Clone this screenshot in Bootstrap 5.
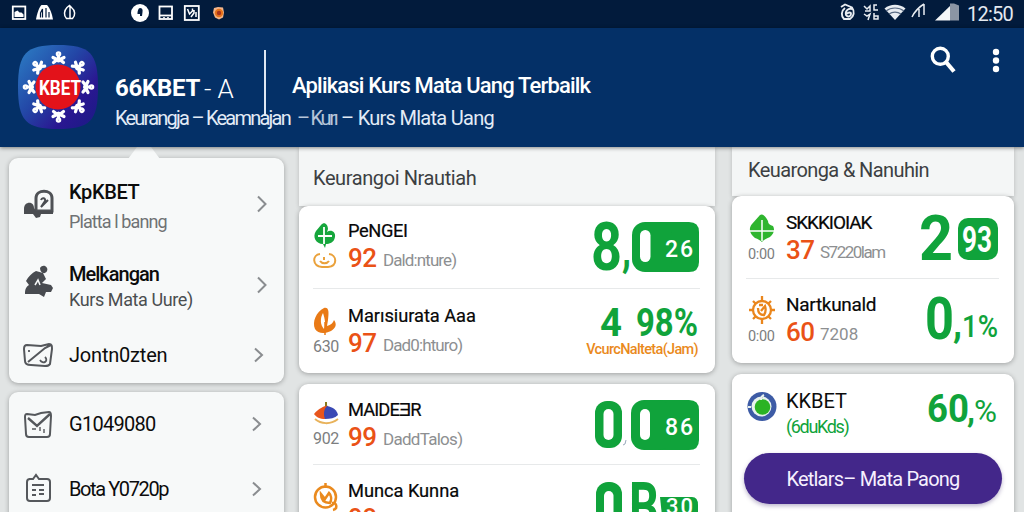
<!DOCTYPE html>
<html lang="id">
<head>
<meta charset="utf-8">
<meta name="viewport" content="width=device-width, initial-scale=1">
<title>66KBET</title>
<link href="https://cdn.jsdelivr.net/npm/bootstrap@5.3.0/dist/css/bootstrap.min.css" rel="stylesheet">
<style>
body{font-family:Roboto,"Liberation Sans",sans-serif;background:#e1e4e4;width:1024px;height:512px;overflow:hidden;color:#111}
svg{display:block;flex:none;overflow:visible}
.statusbar{height:28px;background:#021b3c;color:#fff}
.clock{font-size:20px;line-height:26px;letter-spacing:-.76px;color:#e4e9f0;margin:0 11px 0 7px}
.appbar{height:119px;background:#043067;color:#fff;box-shadow:0 1px 4px rgba(0,0,0,.45);z-index:3}
.brand-row{height:95px;padding-top:22px}
.brand{font-size:24px;font-weight:700;letter-spacing:-.29px;line-height:30px;width:89px;margin-top:23px}
.brand-tail{font-size:26px;font-weight:300;line-height:34px;width:42px;letter-spacing:-.2px;margin-top:22px}
.rule-v{width:2px;height:66px;background:#dfe7f2;margin-left:18px;flex:none}
.headline{font-size:22px;font-weight:500;letter-spacing:-.83px;line-height:30px;white-space:nowrap;margin:21px 0 0 26px}
.subline{font-size:20px;line-height:24px;white-space:nowrap;color:#e3ebf6;margin-top:-17px}
.sub-a{width:182px;letter-spacing:-1.77px}.sub-b{width:44px;letter-spacing:-2.3px;opacity:.8}.sub-c{letter-spacing:-.72px}
.board{height:365px;padding-left:9px;overflow:hidden}
.col-menu{width:275px;margin-right:15px}.col-mid{width:416px;margin-right:17px}.col-side{width:282px}
.panel{background:#f7f9f9;border-radius:9px;box-shadow:0 1px 5px rgba(0,0,0,.3)}
.panel-white{background:#fff}
.menu-top{margin-top:11px;height:225px}
.notch{left:119px;top:-11px}
.menu-row{padding:0 17px 0 14px}
.menu-row .ico{width:46px}
.m-title{font-size:20px;font-weight:400;line-height:26px;white-space:nowrap;color:#0c0c0c}
.m-title.strong{font-weight:500}
.m-note{font-size:18px;line-height:25px;white-space:nowrap;color:#6f7274}
.m-note.dark{color:#4b4e50}
.section{background:#f4f6f6;color:#3c3f42;font-size:20px;padding-left:14px;white-space:nowrap;box-shadow:0 1px 4px rgba(0,0,0,.18)}
.section span{display:block;line-height:24px}
.rates{padding:0 15px 0 14px}
.rate{white-space:nowrap}
.rate+.rate{border-top:1px solid #e7e9ea}
.sign{width:35px}
.side .sign{width:40px}
.r-name{font-size:18.3px;font-weight:400;line-height:26px;color:#080808;-webkit-text-stroke:.2px #080808}
.side .r-name{font-size:19px}
.r-num{font-size:26px;font-weight:500;line-height:28px;letter-spacing:-.6px;color:#ea5216;width:35px}
.side .r-num{width:34px}
.r-sub{font-size:17px;line-height:32px;color:#8d8f91}
.r-tag{font-size:16px;line-height:20px;color:#7c7e80;letter-spacing:-.33px;margin-top:2px}
.r-tag.mini{font-size:14.5px;margin-left:2px}
.green{fill:#10a33b;color:#10a33b}
.big{font-weight:700;font-family:Roboto,sans-serif}
.under{font-size:14.5px;font-weight:500;letter-spacing:-.65px;line-height:18px;color:#ea8a1c;margin:1px 2px 0 0}
.cta{height:51px;border-radius:26px;background:#43278a;color:#f6f0ff;font-size:20px;letter-spacing:-.8px;border:0;box-shadow:0 2px 4px rgba(60,40,110,.35)}
.cta:hover{background:#4c2f96;color:#fff}
.t05{letter-spacing:-.05px}.t4{letter-spacing:-.4px}.t7{letter-spacing:-.72px}.t9{letter-spacing:-.9px}.t15{letter-spacing:-1.5px}
</style>
</head>
<body>
<header class="statusbar d-flex align-items-center">
  <svg width="230" height="28" viewBox="0 0 230 28" fill="none" stroke="#fff" stroke-width="1.8">
    <rect x="12.800" y="6.500" width="12.500" height="12.500"/><path d="M14.500 17v-5l3-1.500 2 2h2l2 2V17z" fill="#fff" stroke="none"/>
    <path d="M36 19.500c1-6 3-12 5.500-14.500h5.500c3 3 5 9 6 14.500z" fill="#fff" stroke="none"/><path d="M40.500 17.500V13l2-4v8.500M46 8v9.500M49 12v5.500" stroke="#021b3c" stroke-width="1.200"/>
    <path d="M67 7.500c-3 3-3.500 8-.5 11h6c3-3 3-8-1-11l-2-2zM70 6v12" stroke-width="1.500"/>
    <circle cx="140" cy="13" r="9" fill="#fff" stroke="none"/><path d="M140 8c2 0 3 1.500 2.500 4l-.5 4h-2v-2h-2.500c0-3 1-6 2.500-6z" fill="#021b3c" stroke="none"/>
    <rect x="159.500" y="6.500" width="12.500" height="12.500"/><path d="M160 15.500h12"/><path d="M163 17.700h2M167 17.700h2" stroke-width="1"/>
    <rect x="184.800" y="6" width="14" height="14"/><path d="M187.500 9l2 5 3-3v-2.500M194 10v3l-3 4M196 12v5" stroke-width="1.500"/>
    <path d="M214 8l4-1 5 .5 1 5-1 5-4 2-4-2-2-5z" fill="#f3b58a" stroke="none"/><circle cx="219" cy="13" r="3.200" fill="#a8341b" stroke="#e6741c" stroke-width="2"/>
  </svg>
  <svg class="ms-auto" width="130" height="28" viewBox="830 0 130 28" fill="none" stroke="#e9edf2" stroke-width="1.900">
    <path d="M841 7l4-2.500 7 3c3 4 2 9-2 11.500h-6c-3-3-3-8 1-11M852 9c-4-1-7 2-6 6 2 3 5 1 5-1s-3-2-4 0"/>
    <path d="M864 6l3 3 3-3v5h-5M877 5h-3v5h4M864 14l3 2 3-2-2 6M874 13v6h4v-3h-4" stroke-width="1.500"/>
    <path d="M884.500 8.500c6-5 15-5 21 0L895 20z" fill="#e9edf2" stroke="none"/><path d="M886 11c5-4 13-4 18 0M889 14c3.500-2.500 8.500-2.500 12 0" stroke="#5a6b84" stroke-width="1.200"/>
    <path d="M912 17c3-6 7-10 12-13M919 9v8M924 4v11" stroke-width="1.500"/>
    <path d="M950 3.500h4l5 2V20.500h-9z" fill="#8b95a4" stroke="none"/><path d="M935 20.500L950 6v14.500z" fill="#f4f6f8" stroke="none"/>
  </svg>
  <span class="clock">12:50</span>
</header>

<nav class="appbar d-flex align-items-start position-relative">
  <svg class="mt-3 ms-3" width="84" height="88" viewBox="16 44 84 88">
    <defs><linearGradient id="lg" x1="0" y1="0" x2="1" y2=".9"><stop offset="0" stop-color="#2c80c6"/><stop offset=".45" stop-color="#2346a6"/><stop offset=".75" stop-color="#2a1791"/><stop offset="1" stop-color="#1c1a86"/></linearGradient>
    <g id="man" fill="none" stroke="#fff" stroke-width="3.200" stroke-linecap="round" stroke-linejoin="round"><circle cx="0" cy="-33" r="1.200"/><path d="M-5.500-29.500l3 1.500h5l3-1.500M0-31v5M-5-24.500l2.500-2h5l2.500 2"/></g></defs>
    <path d="M58 45c32 0 40 8 40 42s-8 42-40 42-40-8-40-42 8-42 40-42z" fill="url(#lg)"/>
    <g transform="translate(58.500 87)"><use href="#man"/><use href="#man" transform="rotate(45)"/><use href="#man" transform="rotate(90)"/><use href="#man" transform="rotate(135)"/><use href="#man" transform="rotate(180)"/><use href="#man" transform="rotate(225)"/><use href="#man" transform="rotate(270)"/><use href="#man" transform="rotate(315)"/></g>
    <circle cx="58" cy="87" r="22.500" fill="#e3121a"/>
    <text x="39" y="94.500" font-size="20" font-weight="700" fill="#fff" textLength="42" lengthAdjust="spacingAndGlyphs">KBET</text>
  </svg>
  <div class="flex-grow-1" style="margin-left:15px">
    <div class="brand-row d-flex align-items-start">
      <span class="brand">66KBET</span>
      <span class="brand-tail">- A</span>
      <span class="rule-v"></span>
      <span class="headline">Aplikasi Kurs Mata Uang Terbailk</span>
    </div>
    <div class="subline d-flex"><span class="sub-a">Keurangja – Keamnajan</span><span class="sub-b">– Kurı</span><span class="sub-c">– Kurs Mlata Uang</span></div>
  </div>
  <svg class="mt-3" width="30" height="32" viewBox="926 44 30 32" fill="none" stroke="#fff" stroke-width="3.400"><circle cx="938.300" cy="56.300" r="8"/><path d="M944 62l8 9.500" stroke-width="4.200"/></svg>
  <svg class="mt-3" style="margin:0 20px 0 30px" width="16" height="32" viewBox="988 44 16 32" fill="#fff"><circle cx="996" cy="52" r="3.200"/><circle cx="996" cy="60.500" r="3.200"/><circle cx="996" cy="69" r="3.200"/></svg>
</nav>

<main class="board d-flex align-items-start">
  <aside class="col-menu flex-shrink-0">
    <section class="panel menu-top position-relative d-flex flex-column">
      <svg class="notch position-absolute" width="32" height="12" fill="#f7f9f9"><path d="M0 12L9 0h14l9 12z"/></svg>
      <div class="menu-row d-flex align-items-center" style="height:97px">
        <div class="ico"><svg width="32" height="32" viewBox="0 0 32 32"><path d="M13 23V10c0-9 16-9 16 0v13z" fill="none" stroke="#4f5256" stroke-width="3"/><path d="M1 21c0-8 10-8 10-1l2 3h17v3H18l-1 3-4 1-3-4H1z" fill="#4a4d51"/><path d="M18 12c1-3 5-2 4 1l-4 6 7-7" fill="none" stroke="#4a4d51" stroke-width="2"/></svg></div>
        <div class="pt-1"><div class="m-title strong t4">KpKBET</div><div class="m-note t9 mt-1">Platta l banng</div></div>
        <svg class="ms-auto" width="11" height="18" fill="none" stroke="#8a8d90" stroke-width="2"><path d="M2 1.500l7.500 7.500L2 16.500"/></svg>
      </div>
      <div class="menu-row d-flex align-items-center" style="height:62px">
        <div class="ico"><svg width="32" height="34" viewBox="0 0 32 34"><path d="M17 4c3-5 9-1 7 3-2 4-7 2-7-3zM13 7l7 2 3 6-4 4 9 2 2 3-2 4h-5l-2 5-5-3H2c0-5 1-7 4-9l-3-4c2-4 6-8 10-10z" fill="#484b50"/><path d="M12 21l3-5 2 5" stroke="#f7f9f9" stroke-width="1.500" fill="none"/></svg></div>
        <div style="padding-top:10px"><div class="m-title strong" style="letter-spacing:-1px">Melkangan</div><div class="m-note dark t4">Kurs Mata Uure)</div></div>
        <svg class="ms-auto mt-2" width="11" height="18" fill="none" stroke="#8a8d90" stroke-width="2"><path d="M2 1.500l7.500 7.500L2 16.500"/></svg>
      </div>
      <div class="menu-row d-flex align-items-center pt-3" style="height:74px">
        <div class="ico"><svg width="31" height="28" viewBox="0 0 31 28" fill="none" stroke="#54575b" stroke-width="2"><path d="M4 4l14 1 8-2c3 0 3 2 3 5l-2 15c-1 2-3 2-5 2l-14-1c-4 0-6-1-6-4L1 8c0-3 1-4 3-4zM5 21L22 7l6-3"/><path d="M17 19c3 5 9 1 5-3M6 9v2" stroke-width="1.800"/></svg></div>
        <div class="m-title" style="letter-spacing:-.2px">Jontn0zten</div>
        <svg class="ms-auto me-1" width="11" height="16" fill="none" stroke="#8a8d90" stroke-width="2"><path d="M3 1.500l7 6.500L3 14.500"/></svg>
      </div>
    </section>
    <section class="panel" style="height:140px;margin-top:9px">
      <div class="menu-row d-flex align-items-center" style="height:64px">
        <div class="ico"><svg width="31" height="30" viewBox="0 0 31 30" fill="none" stroke="#55585c" stroke-width="2"><path d="M4 5l8 1 6-2 8-1c2 0 2 2 2 4l-1 18c0 2-1 3-3 3H6c-2 0-3-1-3-3L2 8c0-2 0-3 2-3z"/><path d="M5 9l9 8L27 5" stroke-width="2.400"/><path d="M9 20h4M17 18v4M21 20v4" stroke-width="1.400"/></svg></div>
        <div class="m-title t7">G1049080</div>
        <svg class="ms-auto me-1" width="12" height="16" fill="none" stroke="#8a8d90" stroke-width="2"><path d="M2 1.500l7 6.500L2 14.500"/></svg>
      </div>
      <div class="menu-row d-flex align-items-center" style="height:66px">
        <div class="ico"><svg width="31" height="28" viewBox="0 0 31 28" fill="none" stroke="#55585c" stroke-width="2"><path d="M6 4h4l3-4 3 4h8c2 0 3 1 3 3v16c0 2-1 3-3 3H7c-2 0-3-1-3-3V7c0-2 1-3 3-3zM9 10h12M9 15h4M16 15h5M9 20h4M16 19h5"/></svg></div>
        <div class="m-title" style="letter-spacing:-1.4px">Bota Y0720p</div>
        <svg class="ms-auto me-1" width="12" height="16" fill="none" stroke="#8a8d90" stroke-width="2"><path d="M2 1.500l7 6.500L2 14.500"/></svg>
      </div>
    </section>
  </aside>

  <section class="col-mid flex-shrink-0">
    <div class="section t4" style="height:59px;padding-top:19px"><span>Keurangoi Nrautiah</span></div>
    <div class="panel panel-white rates" style="height:167px">
      <div class="rate d-flex" style="height:82px;padding-top:12px">
        <div class="sign pt-1"><svg width="27" height="50" viewBox="0 0 27 50"><path d="M8 3c3-4 7-1 7 4l-1 3c4-3 9 0 8 5-1 6-6 7-9 7l-1 4-2-4C3 22-1 15 3 9z" fill="#16a63c"/><path d="M11 5v17M5 14h14" stroke="#fff" stroke-width="1.800"/><path d="M7 32c-8 1-8 12 2 13h6c10-1 9-12 1-13M7 39c2 3 7 3 9 0M11 35v3" fill="none" stroke="#eaa13b" stroke-width="2"/></svg></div>
        <div><div class="r-name t4">PeNGEI</div><div class="d-flex"><span class="r-num">92</span><span class="r-sub t9">Dald:nture)</span></div></div>
        <svg class="ms-auto" width="112" height="58" viewBox="588 218 112 58">
          <path d="M650 222h39q10 0 10 10v30q0 10-10 10h-44z" class="green"/><text class="big green" x="591" y="270" font-size="67" textLength="31" lengthAdjust="spacingAndGlyphs">8</text><text class="big green" x="622" y="266" font-size="48" textLength="9" lengthAdjust="spacingAndGlyphs">,</text>
          <rect x="632" y="222" width="40" height="50" rx="13" class="green"/><rect x="640" y="230" width="10.500" height="32" rx="5.200" fill="#fff"/>
          <text x="665" y="257" font-size="23" font-weight="500" fill="#fff" textLength="28">26</text>
        </svg>
      </div>
      <div class="rate d-flex" style="height:85px;padding-top:14px">
        <div class="sign pt-1"><svg width="27" height="28" viewBox="0 0 27 28"><path d="M11 1c5-1 5 4 4 12l-1 6c4-1 6-3 7-6 3 4 2 8-3 11-6 3-13 3-16-2-3-7 1-17 9-21z" fill="#e97a16"/><path d="M10 6c-3 5-3 12 1 16 2-4 1-10-1-16z" fill="#fff"/><path d="M12 15v13" stroke="#e97a16" stroke-width="1.500"/></svg><div class="r-tag">630</div></div>
        <div><div class="r-name t05">Marısiurata Aaa</div><div class="d-flex"><span class="r-num">97</span><span class="r-sub t9">Dad0:hturo)</span></div></div>
        <div class="ms-auto text-end"><svg class="ms-auto" width="100" height="37" viewBox="599 302 100 37"><text class="big green" x="599" y="335" font-size="39" textLength="22" lengthAdjust="spacingAndGlyphs">4</text><text class="big green" x="635" y="335" font-size="39" textLength="62" lengthAdjust="spacingAndGlyphs">98%</text></svg><div class="under">VcurcNalteta(Jam)</div></div>
      </div>
    </div>
    <div class="panel panel-white rates" style="height:170px;margin-top:11px">
      <div class="rate d-flex" style="height:80px;padding-top:13px">
        <div class="sign pt-1"><svg width="27" height="26" viewBox="0 0 27 26"><path d="M12 1h2v6h-2z" fill="#8a7a1c"/><path d="M1 13c5-6 12-9 14-8l-3 13C7 18 3 16 1 13z" fill="#e8551c"/><path d="M14 5c6 1 10 4 11 9-3 3-8 4-13 4-2-5-1-10 2-13z" fill="#3a49b4"/><path d="M2 18c6 5 15 6 23 0" stroke="#e8b25a" stroke-width="2" fill="none"/></svg><div class="r-tag">902</div></div>
        <div><div class="r-name t9">MAIDEƎR</div><div class="d-flex"><span class="r-num">99</span><span class="r-sub t7">DaddTalos)</span></div></div>
        <svg class="ms-auto" width="112" height="58" viewBox="588 397 112 58">
          <rect x="595" y="401" width="27" height="47" rx="12" class="green"/><rect x="603.500" y="409" width="10" height="31" rx="5" fill="#fff"/><path d="M626 440l-1 4-2 1" stroke="#9ab" fill="none"/>
          <path d="M650 400h39q10 0 10 10v30q0 10-10 10h-44z" class="green"/><rect x="631" y="400" width="40" height="50" rx="13" class="green"/><rect x="640" y="409" width="10" height="31" rx="5" fill="#fff"/>
          <text x="665" y="435" font-size="23" font-weight="500" fill="#fff" textLength="28">86</text>
        </svg>
      </div>
      <div class="rate d-flex" style="height:90px;padding-top:13px">
        <div class="sign pt-1"><svg width="28" height="32" viewBox="0 0 28 32" fill="none" stroke="#ea8a1e" stroke-width="2.500"><circle cx="12.500" cy="15" r="10.500"/><path d="M12.500 1v5M8 12c0 7 4 9 9 9 2-4 1-8-1-10l-4 6zM19 21c5-1 6 6 1 7"/></svg></div>
        <div><div class="r-name t05">Munca Kunna</div><div class="d-flex"><span class="r-num">98</span><span class="r-sub t7">Dadnalos)</span></div></div>
        <svg class="ms-auto" width="112" height="60" viewBox="588 478 112 60">
          <rect x="596" y="482" width="26" height="50" rx="12" class="green"/><rect x="604" y="491" width="9.500" height="34" rx="4.700" fill="#fff"/><text class="big green" x="629" y="530" font-size="66" textLength="30" lengthAdjust="spacingAndGlyphs">B</text>
          <path d="M660 497h32q6 0 6 8v30h-34z" class="green"/><text x="666" y="514" font-size="22" font-weight="500" fill="#fff" textLength="27">30</text>
        </svg>
      </div>
    </div>
  </section>

  <section class="col-side side flex-shrink-0">
    <div class="section" style="height:49px;padding:11px 0 0 16px;letter-spacing:-.6px"><span>Keuaronga &amp; Nanuhin</span></div>
    <div class="panel panel-white rates" style="height:167px">
      <div class="rate d-flex" style="height:82px;padding-top:14px">
        <div class="sign pt-1"><svg style="margin-left:3px" width="26" height="29" viewBox="0 0 26 29"><path d="M11 1c3-2 6 2 8 6 0 3 2 4 5 5 2 3 1 8-3 11-4 2-7 3-8 5-2-2-4-3-7-4-5-4-7-9-3-14z" fill="#2fb52f"/><path d="M13 6v21M1 17h24" stroke="#fff" stroke-width="1.500"/></svg><div class="r-tag mini">0:00</div></div>
        <div><div class="r-name" style="letter-spacing:-1.05px">SKKKIOIAK</div><div class="d-flex"><span class="r-num">37</span><span class="r-sub t15">S7220lam</span></div></div>
        <svg class="ms-auto" width="82" height="54" viewBox="918 210 82 54"><text class="big green" x="920" y="260" font-size="63" textLength="34" lengthAdjust="spacingAndGlyphs">2</text><rect x="959" y="218" width="40" height="42" rx="10" class="green"/><text x="963" y="252" font-size="36" font-weight="700" fill="#fff" textLength="30" lengthAdjust="spacingAndGlyphs">93</text></svg>
      </div>
      <div class="rate d-flex" style="height:85px;padding-top:13px">
        <div class="sign pt-1"><svg style="margin-left:3px" width="27" height="29" viewBox="0 0 27 29" fill="none" stroke="#ea861c" stroke-width="2.300"><circle cx="13" cy="14" r="9"/><path d="M13 0v5M13 23v5M0 14h4M22 14h4M4 5l3 3M22 5l-3 3M4 23l3-3M22 23l-3-3M9 12c0 5 2 7 6 7 2-3 2-6 1-9l-4 5M10 9h4"/></svg><div class="r-tag mini">0:00</div></div>
        <div><div class="r-name" style="letter-spacing:-.3px">Nartkunald</div><div class="d-flex"><span class="r-num">60</span><span class="r-sub">7208</span></div></div>
        <svg class="ms-auto" width="76" height="56" viewBox="924 292 76 56"><text class="big green" x="926" y="339" font-size="59" textLength="29" lengthAdjust="spacingAndGlyphs">0</text><text class="big green" x="954" y="337" font-size="40" textLength="9" lengthAdjust="spacingAndGlyphs">,</text><text class="green" font-weight="500" x="963" y="337" font-size="31" textLength="36" lengthAdjust="spacingAndGlyphs">1%</text></svg>
      </div>
    </div>
    <div class="panel panel-white" style="height:150px;margin-top:11px;padding:14px 12px 0">
      <div class="d-flex ps-1">
        <svg style="margin:3px 8px 0 -1px" width="30" height="31" viewBox="0 0 30 31"><circle cx="15" cy="15.500" r="14.500" fill="#3d5ba5"/><circle cx="14.500" cy="15.500" r="10" fill="#e9f3ee"/><circle cx="15.500" cy="16" r="7.800" fill="#2bb324"/><path d="M14 9c0-3 1-4 3-5M1 16h3" stroke="#e9f3ee" stroke-width="2"/></svg>
        <div class="text-nowrap ps-px" style="margin-left:1px"><div class="m-title">KKBET</div><div class="green" style="font-size:18px;letter-spacing:-1.35px;line-height:26px">(6duKds)</div></div>
        <svg class="ms-auto me-1" width="72" height="40" viewBox="928 388 72 40"><text class="big green" x="929" y="422" font-size="38" textLength="42" lengthAdjust="spacingAndGlyphs">60</text><text class="big green" x="969" y="422" font-size="34" textLength="8" lengthAdjust="spacingAndGlyphs">,</text><text class="green" x="976" y="422" font-size="32" textLength="23" lengthAdjust="spacingAndGlyphs">%</text></svg>
      </div>
      <button type="button" class="btn cta w-100" style="margin-top:13px">Ketlars– Mata Paong</button>
    </div>
  </section>
</main>
<script src="https://cdn.jsdelivr.net/npm/bootstrap@5.3.0/dist/js/bootstrap.bundle.min.js"></script>
</body>
</html>
